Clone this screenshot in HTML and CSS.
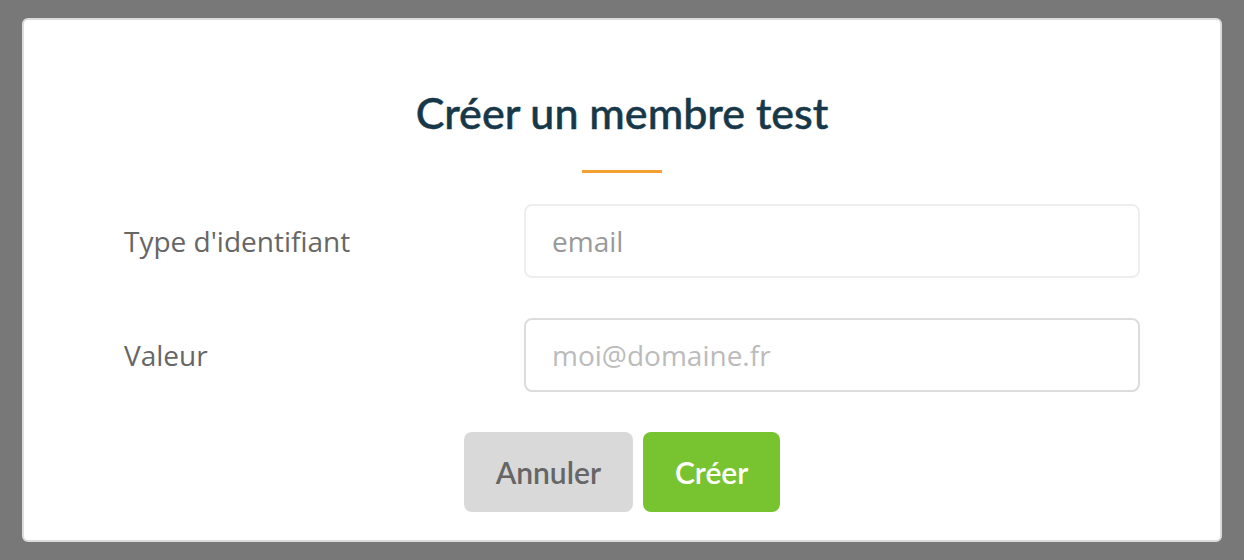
FILE: index.html
```html
<!DOCTYPE html>
<html lang="fr">
<head>
    <meta charset="UTF-8">
    <meta name="viewport" content="width=device-width, initial-scale=1.0">
    <title>Créer un membre test</title>
    <link rel="stylesheet" href="styles.css">
</head>
<body>

<!-- Modal -->
<div class="modal">
    <h2 class="modal-title">Créer un membre test</h2>
    <div class="title-bar"></div>

    <form class="test-form">
        <div class="form-row">
            <label class="form-label" for="id-type">Type d'identifiant</label>
            <div class="form-field disabled" id="id-type">email</div>
        </div>
        <div class="form-row">
            <label class="form-label" for="id-value">Valeur</label>
            <input class="form-field" id="id-value" type="text" placeholder="moi@domaine.fr">
        </div>

        <div class="form-actions">
            <button type="button" class="btn btn-cancel">Annuler</button>
            <button type="submit" class="btn btn-create">Créer</button>
        </div>
    </form>
</div>

</body>
</html>
```

FILE: styles.css
```css
/* Page */
body {
    margin: 0;
    padding: 18px 22px;
    background: #787878;
    font-family: 'Open Sans', 'Noto Sans', sans-serif;
    height: 560px;
    box-sizing: border-box;
    overflow: hidden;
}

/* Modal box */
.modal {
    background: #fff;
    border: 2px solid #dcdcdc;
    border-radius: 6px;
    height: 524px;
    box-sizing: border-box;
    padding: 68px 80px 0 100px;
}

.modal-title {
    margin: 0 -80px 0 -100px;
    font-family: 'Lato', sans-serif;
    font-size: 43px;
    font-weight: 500;
    line-height: 50px;
    color: #173849;
    -webkit-text-stroke: 0.5px #173849; /* Lato has no medium weight here */
    text-align: center;
}

.title-bar {
    width: 80px;
    height: 3px;
    background: #f5a033;
    margin: 32px auto 31px;
    position: relative;
    left: -10px;
}

/* Form rows */
.form-row {
    display: flex;
    align-items: center;
    margin-bottom: 40px;
}

.form-label {
    width: 400px;
    flex-shrink: 0;
    font-size: 28px;
    color: #666;
}

.form-field {
    flex: 1;
    height: 74px;
    box-sizing: border-box;
    border: 2px solid #dcdcdc;
    border-radius: 8px;
    padding: 0 26px;
    font-family: 'Open Sans', sans-serif;
    font-size: 28px;
    color: #555;
    background: #fff;
    outline: none;
    display: flex;
    align-items: center;
}

.form-field::placeholder {
    color: #bbb;
}

.form-field.disabled {
    border-color: #eeeeee;
    color: #999;
}

/* Buttons */
.form-actions {
    display: flex;
    justify-content: center;
    gap: 10px;
    margin: 0 -80px 0 -100px;
}

.btn {
    height: 80px;
    border: none;
    border-radius: 8px;
    font-family: 'Lato', sans-serif;
    font-size: 30px;
    font-weight: 600;
    padding: 0 32px;
    cursor: pointer;
}

.btn-cancel {
    background: #d9d9d9;
    color: #666;
}

.btn-create {
    background: #78c430;
    color: #fff;
}
```
